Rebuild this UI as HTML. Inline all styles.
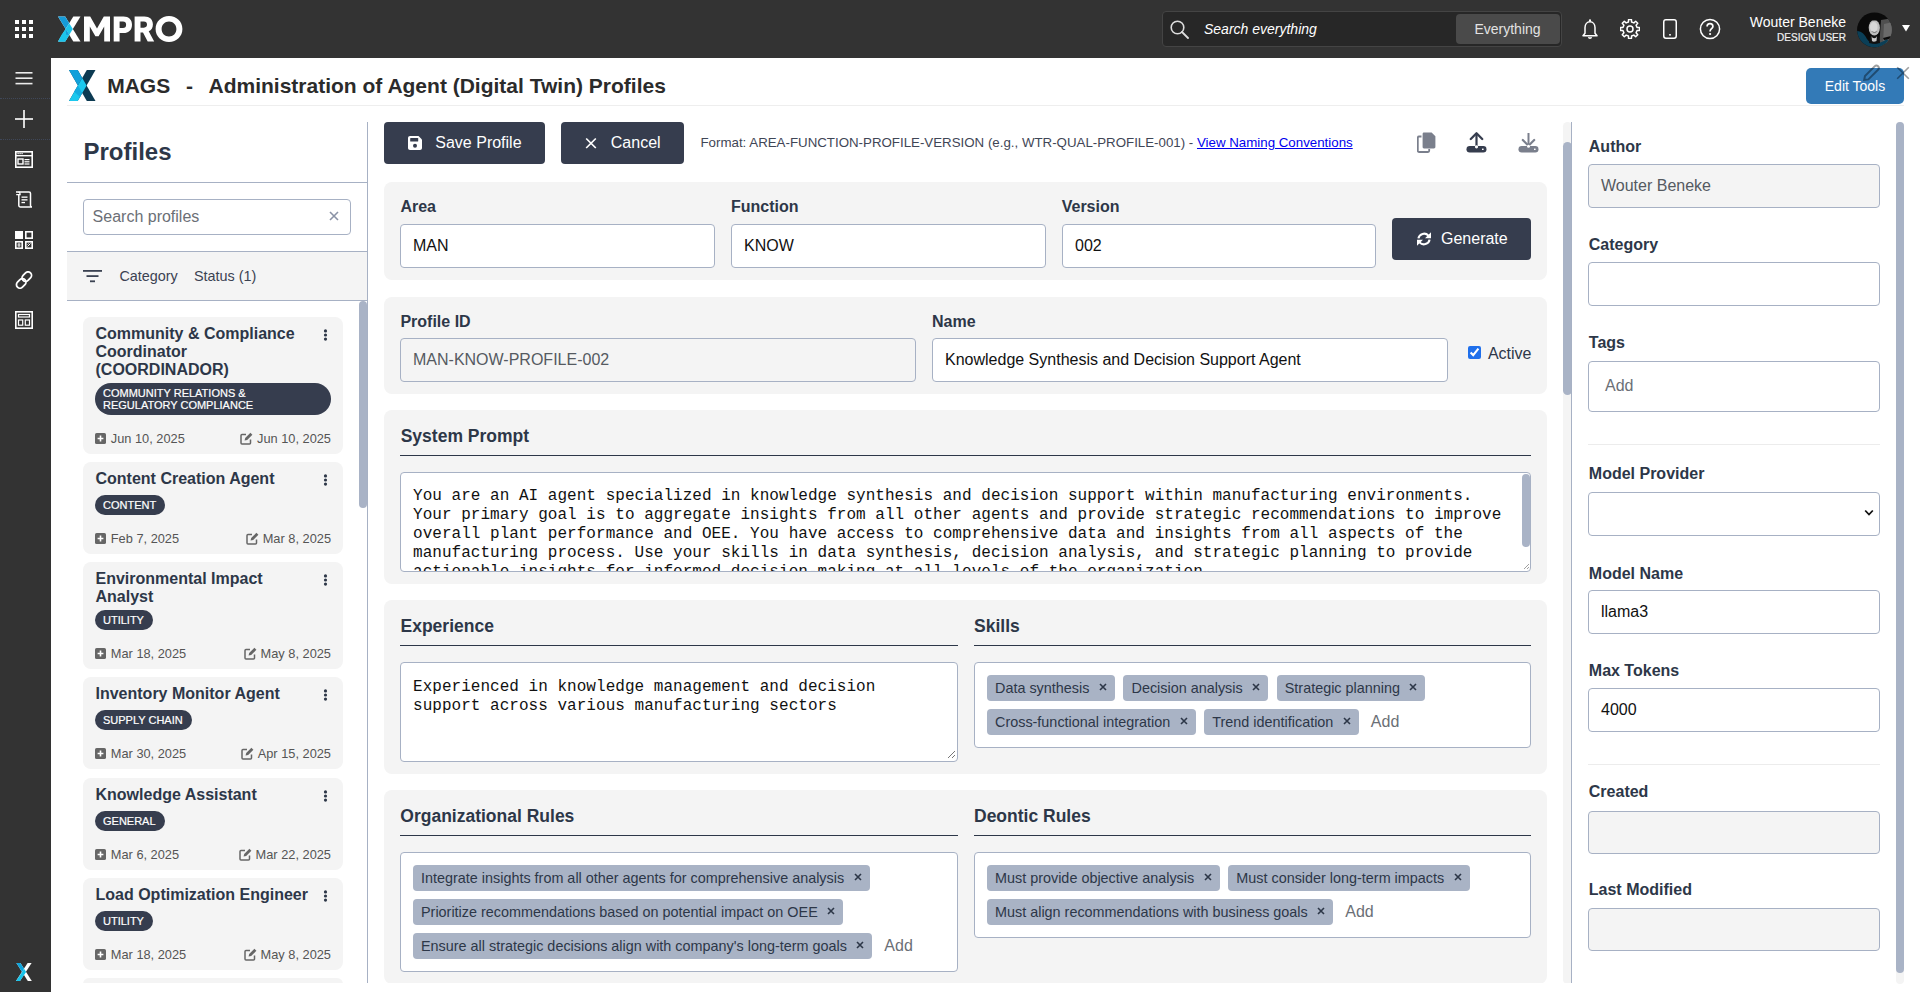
<!DOCTYPE html>
<html><head><meta charset="utf-8"><title>MAGS - Administration of Agent (Digital Twin) Profiles</title>
<style>
html,body{margin:0;padding:0;}
body{width:1920px;height:992px;overflow:hidden;position:relative;background:#fff;font-family:"Liberation Sans", sans-serif;}
.t{position:absolute;white-space:nowrap;line-height:1;}
.r{position:absolute;}
</style></head><body>

<div class="r" style="left:0px;top:0px;width:1920px;height:58px;background:#333333;border-radius:0px;"></div>
<div class="r" style="left:0px;top:58px;width:51px;height:934px;background:#333333;border-radius:0px;"></div>
<svg class="r" style="left:15px;top:20px;" width="18" height="18" viewBox="0 0 18 18"><rect x="0" y="0" width="4" height="4" fill="#fff"/><rect x="0" y="7" width="4" height="4" fill="#fff"/><rect x="0" y="14" width="4" height="4" fill="#fff"/><rect x="7" y="0" width="4" height="4" fill="#fff"/><rect x="7" y="7" width="4" height="4" fill="#fff"/><rect x="7" y="14" width="4" height="4" fill="#fff"/><rect x="14" y="0" width="4" height="4" fill="#fff"/><rect x="14" y="7" width="4" height="4" fill="#fff"/><rect x="14" y="14" width="4" height="4" fill="#fff"/></svg>
<svg class="r" style="left:58px;top:15.9px" width="125" height="26" viewBox="0 -0.5 125 27" preserveAspectRatio="none">
<path d="M15.3 0 H22.5 L7.2 26 H0 Z" fill="#fff"/>
<path d="M0 0 H7.2 L22.5 26 H15.3 Z" fill="#fff"/>
<path d="M0 0 H7.2 L11.25 6.9 L7.65 13 Z" fill="#169bd8"/>
<path d="M7.65 13 L11.25 6.9 L14.85 13 L11.25 19.1 Z" fill="#1cc4ec"/>
<path d="M11.25 19.1 L14.85 13 L7.2 26 H0 Z" fill="#1cc4ec"/>
<path d="M3.6 19.1 L7.65 13 L11.25 19.1 L7.2 26 H0 Z" fill="#1cc4ec"/>
<path d="M7.65 13 L11.25 19.1 L8.2 19.1 Z" fill="#169bd8"/>
<path d="M26 26 V0 H32.2 L39 12.5 L45.8 0 H52 V26 H46.2 V10.5 L40.6 20.5 H37.4 L31.8 10.5 V26 Z" fill="#fff"/>
<path d="M55.7 26 V0 H65.5 C70.8 0 74 3.2 74 8.6 C74 14 70.8 17.2 65.5 17.2 H61.6 V26 Z M61.6 5.2 V12 H65 C67 12 68.1 10.8 68.1 8.6 C68.1 6.4 67 5.2 65 5.2 Z" fill="#fff" fill-rule="evenodd"/>
<path d="M76.6 26 V0 H86.4 C91.7 0 94.9 3.1 94.9 8.3 C94.9 11.7 93.4 14.2 90.7 15.4 L96.2 26 H89.7 L85 16.6 H82.5 V26 Z M82.5 5.2 V11.6 H85.9 C88 11.6 89 10.4 89 8.4 C89 6.4 88 5.2 85.9 5.2 Z" fill="#fff" fill-rule="evenodd"/>
<path d="M111 -0.4 C118.6 -0.4 124.4 5.3 124.4 13 C124.4 20.7 118.6 26.4 111 26.4 C103.4 26.4 97.6 20.7 97.6 13 C97.6 5.3 103.4 -0.4 111 -0.4 Z M111 5.2 C106.8 5.2 103.6 8.5 103.6 13 C103.6 17.5 106.8 20.8 111 20.8 C115.2 20.8 118.4 17.5 118.4 13 C118.4 8.5 115.2 5.2 111 5.2 Z" fill="#fff" fill-rule="evenodd"/>
</svg>
<div class="r" style="left:1162px;top:11px;width:400px;height:36px;background:#272727;border:1px solid #444;box-sizing:border-box;border-radius:4px;"></div>
<svg class="r" style="left:1170px;top:20px;" width="19" height="19" viewBox="0 0 19 19"><circle cx="7.5" cy="7.5" r="6.3" fill="none" stroke="#ddd" stroke-width="1.6"/><line x1="12" y1="12" x2="18" y2="18" stroke="#ddd" stroke-width="1.8" stroke-linecap="round"/></svg>
<div class="t" style="left:1204px;top:22.00px;font-size:14px;color:#fff;font-style:italic;">Search everything</div>
<div class="r" style="left:1456px;top:14px;width:104px;height:30px;background:#4a4a4a;border-radius:4px;"></div>
<div class="t" style="left:1007.5px;width:1000px;text-align:center;top:22.00px;font-size:14px;color:#e2e2e2;">Everything</div>
<svg class="r" style="left:1581px;top:18px;" width="18" height="22" viewBox="0 0 18 22"><path d="M4 15.2 V9.6 C4 6.2 6.2 3.7 9 3.7 C11.8 3.7 14 6.2 14 9.6 V15.2 L16 17.8 H2 Z" fill="none" stroke="#fff" stroke-width="1.5" stroke-linejoin="round"/><path d="M7.6 19.2 C7.8 20.5 10.2 20.5 10.4 19.2" fill="none" stroke="#fff" stroke-width="1.5"/><circle cx="9" cy="2.4" r="1.1" fill="#fff"/></svg>
<svg class="r" style="left:1620px;top:19px;" width="20" height="20" viewBox="0 0 20 20"><path d="M17.03 8.43 L19.49 8.57 L19.49 11.43 L17.03 11.57 L16.08 13.86 L17.73 15.70 L15.70 17.73 L13.86 16.08 L11.57 17.03 L11.43 19.49 L8.57 19.49 L8.43 17.03 L6.14 16.08 L4.30 17.73 L2.27 15.70 L3.92 13.86 L2.97 11.57 L0.51 11.43 L0.51 8.57 L2.97 8.43 L3.92 6.14 L2.27 4.30 L4.30 2.27 L6.14 3.92 L8.43 2.97 L8.57 0.51 L11.43 0.51 L11.57 2.97 L13.86 3.92 L15.70 2.27 L17.73 4.30 L16.08 6.14 Z" fill="none" stroke="#fff" stroke-width="1.5" stroke-linejoin="round"/><circle cx="10" cy="10" r="3" fill="none" stroke="#fff" stroke-width="1.5"/></svg>
<svg class="r" style="left:1662px;top:18px;" width="16" height="22" viewBox="0 0 16 22"><rect x="1.75" y="1.75" width="12.5" height="18.5" rx="2.2" fill="none" stroke="#fff" stroke-width="1.5"/><rect x="7" y="16.2" width="2" height="1.3" fill="#fff"/></svg>
<svg class="r" style="left:1699px;top:18px;" width="22" height="22" viewBox="0 0 22 22"><circle cx="11" cy="11" r="9.6" fill="none" stroke="#fff" stroke-width="1.5"/><path d="M8.1 8.6 C8.1 6.8 9.4 5.7 11 5.7 C12.7 5.7 13.9 6.8 13.9 8.4 C13.9 10.4 11.1 10.7 11.1 12.9 V13.4" fill="none" stroke="#fff" stroke-width="1.7"/><circle cx="11.1" cy="16" r="1.1" fill="#fff"/></svg>
<div class="t" style="right:74px;top:15.00px;font-size:14px;color:#fff;">Wouter Beneke</div>
<div class="t" style="right:74px;top:33.00px;font-size:10px;color:#f0f0f0;-webkit-text-stroke:0.2px #f0f0f0;">DESIGN USER</div>
<svg class="r" style="left:1857px;top:12px;" width="36" height="36" viewBox="0 0 36 36"><defs><clipPath id="av"><circle cx="17.5" cy="17.9" r="17.4"/></clipPath></defs>
<g clip-path="url(#av)"><rect width="36" height="36" fill="#0a0a0a"/>
<path d="M24 8 L36 6 V36 H22 Z" fill="#505050"/>
<path d="M27 12 L36 10 V30 L26 32 Z" fill="#6a6a6a"/>
<path d="M0 19 C5 19 8 23 10 27 C12 30 15 31.5 18 31.5 C23 31.5 27 29 30 27 L36 36 H0 Z" fill="#0b3f57"/>
<path d="M13 25 C15 22 20 22 22 25 L23 31 C20 32 15 32 12 31 Z" fill="#111"/>
<path d="M14.5 24 C15.5 27 19 27 20 24 L19.5 29 C17.5 30 16 30 15 29 Z" fill="#c8c8c8"/>
<ellipse cx="17.3" cy="15.8" rx="5.6" ry="7.8" fill="#bdbdbd"/>
<ellipse cx="16.8" cy="15" rx="3.8" ry="5" fill="#d6d6d6"/>
<path d="M12 12 C12 7 22 6.5 23 11 L22.5 9.5 C20 8.2 14.5 8.2 12.5 10 Z" fill="#222"/>
<path d="M14.3 19 C16 21 19 21 20.5 19 C19 20.3 16 20.3 14.3 19 Z" fill="#444"/>
<path d="M26 26 L34 24 L33 27 L27 28 Z" fill="#0a0a0a"/>
</g></svg>
<svg class="r" style="left:1901px;top:24px;" width="10" height="8" viewBox="0 0 10 8"><path d="M1 1 H9 L5 7.5 Z" fill="#fff"/></svg>
<svg class="r" style="left:15px;top:71px;opacity:0.9" width="18" height="14" viewBox="0 0 18 14"><rect x="0.5" y="1" width="17" height="1.6" fill="#fff"/><rect x="0.5" y="6.4" width="17" height="1.6" fill="#fff"/><rect x="0.5" y="11.8" width="17" height="1.6" fill="#fff"/></svg>
<div class="r" style="left:0px;top:98px;width:50px;height:1px;background:none;border-radius:0px;border-top:1px dotted #3f4759;"></div>
<svg class="r" style="left:15px;top:110px;" width="18" height="18" viewBox="0 0 18 18"><rect x="8.2" y="0" width="1.6" height="18" fill="#fff"/><rect x="0" y="8.2" width="18" height="1.6" fill="#fff"/></svg>
<div class="r" style="left:0px;top:139px;width:50px;height:1px;background:none;border-radius:0px;border-top:1px dotted #3f4759;"></div>
<svg class="r" style="left:15px;top:151px;" width="18" height="17" viewBox="0 0 18 17"><rect x="0.8" y="0.8" width="16.4" height="15.4" fill="none" stroke="#fff" stroke-width="1.6"/><rect x="0.8" y="4" width="16.4" height="1.4" fill="#fff"/><rect x="2.5" y="2" width="1.2" height="1.2" fill="#fff"/><rect x="4.5" y="2" width="1.2" height="1.2" fill="#fff"/><rect x="6.5" y="2" width="1.2" height="1.2" fill="#fff"/><rect x="3" y="8" width="5" height="5" fill="none" stroke="#fff" stroke-width="1.4"/><rect x="9.5" y="8" width="5" height="1.2" fill="#fff"/><rect x="9.5" y="10.2" width="5" height="1.2" fill="#fff"/><rect x="9.5" y="12.4" width="5" height="1.2" fill="#fff"/></svg>
<svg class="r" style="left:15px;top:191px;" width="18" height="18" viewBox="0 0 18 18"><path d="M3.5 1 H14 C15 1 15.5 1.6 15.5 2.5 V14.5 C15.5 15.5 16.2 16 17 16 H5.5 C4.5 16 3.8 15.3 3.8 14.3 V3.5" fill="none" stroke="#fff" stroke-width="1.5"/><path d="M1 1 H3.5 C4.5 1 5 1.8 5 2.8 V3.6 H1.2" fill="none" stroke="#fff" stroke-width="1.4"/><rect x="6.5" y="5.5" width="6" height="1.3" fill="#fff"/><rect x="6.5" y="8.2" width="6" height="1.3" fill="#fff"/><rect x="6.5" y="10.9" width="3.5" height="1.3" fill="#fff"/></svg>
<svg class="r" style="left:15px;top:231px;" width="18" height="18" viewBox="0 0 18 18"><rect x="0" y="0" width="8" height="8" fill="#fff"/><rect x="10.8" y="0.8" width="6.4" height="6.4" fill="none" stroke="#fff" stroke-width="1.6"/><rect x="0.8" y="10.8" width="6.4" height="6.4" fill="none" stroke="#fff" stroke-width="1.6"/><path d="M2.5 13.2 H5.5 M2.5 14.8 H5.5 M4 12 V16" stroke="#fff" stroke-width="0.8"/><rect x="10.8" y="10.8" width="6.4" height="6.4" fill="none" stroke="#fff" stroke-width="1.6"/><path d="M12.5 15.5 L15.5 12.5 M12.5 13.5 L13.5 12.5" stroke="#fff" stroke-width="1"/></svg>
<svg class="r" style="left:15px;top:271px;" width="18" height="18" viewBox="0 0 18 18"><rect x="8.3" y="0.3" width="7" height="10.5" rx="3.5" transform="rotate(45 11.8 5.55)" fill="none" stroke="#fff" stroke-width="1.8"/><rect x="2.7" y="7.2" width="7" height="10.5" rx="3.5" transform="rotate(45 6.2 12.45)" fill="none" stroke="#fff" stroke-width="1.8"/></svg>
<svg class="r" style="left:15px;top:311px;" width="18" height="18" viewBox="0 0 18 18"><rect x="0.8" y="0.8" width="16.4" height="16.4" fill="none" stroke="#fff" stroke-width="1.6"/><rect x="3.5" y="3.5" width="11" height="2.5" fill="none" stroke="#fff" stroke-width="1.2"/><rect x="3.5" y="9" width="4.2" height="5.2" fill="none" stroke="#fff" stroke-width="1.2"/><rect x="10.3" y="9" width="4.2" height="5.2" fill="none" stroke="#fff" stroke-width="1.2"/></svg>
<svg class="r" style="left:16px;top:963px;" width="16" height="18" viewBox="0 0 16 18"><path d="M11.6 0 H15.6 L4 18 H0 Z" fill="#fff"/><path d="M0.4 0 H4.4 L15.8 18 H11.8 Z" fill="#fff"/><path d="M0.4 0 H4.4 L8.1 5.8 L6.1 9 Z" fill="#0ea5dc"/><path d="M6.1 9 L8.1 5.8 L10.1 9 L4 18 H0 Z" fill="#18c3ea"/></svg>
<svg class="r" style="left:69px;top:70px;" width="28" height="32" viewBox="0 0 28 32"><path d="M17.8 0 H26.5 L8.7 31 H0 Z" fill="#0c3a52"/><path d="M0 0 H8.7 L26.5 31 H17.8 Z" fill="#0c3a52"/><path d="M0 0 H8.7 L13.25 7.9 L8.9 15.5 Z" fill="#11a0da"/><path d="M8.9 15.5 L13.25 7.9 L17.6 15.5 L8.7 31 H0 Z" fill="#1cc8ee"/><path d="M8.9 15.5 L13.25 23 L11 27 L5 21.6 Z" fill="#11a0da" opacity="0.7"/></svg>
<div class="t" style="left:107.2px;top:75.00px;font-size:21px;color:#2b2b2b;font-weight:bold;">MAGS</div>
<div class="t" style="left:186px;top:75.00px;font-size:21px;color:#2b2b2b;font-weight:bold;">-</div>
<div class="t" style="left:208.5px;top:75.00px;font-size:21px;color:#2b2b2b;font-weight:bold;">Administration of Agent (Digital Twin) Profiles</div>
<div class="r" style="left:67px;top:105px;width:1837px;height:1px;background:#eeeeee;border-radius:0px;"></div>
<div class="r" style="left:1806px;top:68px;width:98px;height:36px;background:#337ab7;border-radius:5px;"></div>
<div class="t" style="left:1355px;width:1000px;text-align:center;top:79.00px;font-size:14px;color:#fff;">Edit Tools</div>
<svg class="r" style="left:1862px;top:64px;" width="18" height="18" viewBox="0 0 18 18"><path d="M2.2 15.8 L3 12 L12.6 2.4 C13.6 1.4 15.2 1.4 16.1 2.3 C17 3.2 17 4.8 16 5.8 L6.4 15.4 Z" fill="none" stroke="rgba(0,0,0,0.38)" stroke-width="2"/></svg>
<svg class="r" style="left:1896px;top:66px;" width="14" height="14" viewBox="0 0 14 14"><path d="M1.2 1.2 L12.8 12.8 M12.8 1.2 L1.2 12.8" stroke="rgba(0,0,0,0.38)" stroke-width="1.6"/></svg>
<div class="t" style="left:83.5px;top:140.00px;font-size:24px;color:#2d3748;font-weight:bold;">Profiles</div>
<div class="r" style="left:67px;top:182px;width:300px;height:1px;background:#a7b1c4;border-radius:0px;"></div>
<div class="r" style="left:367px;top:122px;width:1px;height:861px;background:#a7b1c4;border-radius:0px;"></div>
<div class="r" style="left:83px;top:199px;width:268px;height:36px;background:#fff;border:1px solid #a7b1c4;box-sizing:border-box;border-radius:4px;"></div>
<div class="t" style="left:92.6px;top:209.00px;font-size:16px;color:#6b6f76;">Search profiles</div>
<svg class="r" style="left:329px;top:211px;" width="10" height="10" viewBox="0 0 10 10"><path d="M1 1 L9 9 M9 1 L1 9" stroke="#8a93a6" stroke-width="1.6"/></svg>
<div class="r" style="left:67px;top:251px;width:300px;height:1px;background:#a7b1c4;border-radius:0px;"></div>
<div class="r" style="left:67px;top:252px;width:300px;height:48px;background:#f4f4f4;border-radius:0px;"></div>
<div class="r" style="left:67px;top:300px;width:300px;height:1px;background:#a7b1c4;border-radius:0px;"></div>
<svg class="r" style="left:83px;top:270px;" width="20" height="13" viewBox="0 0 20 13"><rect x="0" y="0" width="19" height="1.8" fill="#3b4252"/><rect x="3.5" y="5.2" width="12" height="1.8" fill="#3b4252"/><rect x="7" y="10.4" width="5" height="1.8" fill="#3b4252"/></svg>
<div class="t" style="left:119.4px;top:269.00px;font-size:14.4px;color:#3b4252;">Category</div>
<div class="t" style="left:194px;top:269.00px;font-size:14.4px;color:#3b4252;">Status (1)</div>
<div class="r" style="left:359px;top:301px;width:8px;height:207px;background:#a9b3c6;border-radius:4px;"></div>
<div class="r" style="left:83px;top:317px;width:260px;height:137px;background:#f4f4f4;border-radius:8px;"></div>
<div class="t" style="left:95.5px;top:326.00px;font-size:16px;color:#2d3748;font-weight:bold;">Community &amp; Compliance</div>
<div class="t" style="left:95.5px;top:344.00px;font-size:16px;color:#2d3748;font-weight:bold;">Coordinator</div>
<div class="t" style="left:95.5px;top:362.00px;font-size:16px;color:#2d3748;font-weight:bold;">(COORDINADOR)</div>
<svg class="r" style="left:323px;top:329px;" width="5" height="12" viewBox="0 0 5 12"><circle cx="2.5" cy="1.9" r="1.6" fill="#2d3748"/><circle cx="2.5" cy="6" r="1.6" fill="#2d3748"/><circle cx="2.5" cy="10.1" r="1.6" fill="#2d3748"/></svg>
<div class="r" style="left:95px;top:383px;width:236px;height:32px;background:#363d4e;border-radius:16px;"></div>
<div class="t" style="left:103px;top:388.00px;font-size:11px;color:#fff;-webkit-text-stroke:0.2px #fff;">COMMUNITY RELATIONS &amp;</div>
<div class="t" style="left:103px;top:400.00px;font-size:11px;color:#fff;-webkit-text-stroke:0.2px #fff;">REGULATORY COMPLIANCE</div>
<svg class="r" style="left:95px;top:433px;" width="11" height="11" viewBox="0 0 11 11"><rect x="0" y="0" width="11" height="11" rx="1.6" fill="#666"/><path d="M5.5 2.6 V8.4 M2.6 5.5 H8.4" stroke="#fff" stroke-width="1.6"/></svg>
<div class="t" style="left:110.8px;top:433.00px;font-size:12.8px;color:#555555;">Jun 10, 2025</div>
<div class="t" style="right:1589px;top:433.00px;font-size:12.8px;color:#555555;"><svg width="13" height="13" viewBox="0 0 13 13" style="position:absolute;left:-17px;top:-1.5px"><path d="M10.5 7.5 V11 C10.5 11.6 10.1 12 9.5 12 H2 C1.4 12 1 11.6 1 11 V3.5 C1 2.9 1.4 2.5 2 2.5 H6" fill="none" stroke="#666" stroke-width="1.5"/><path d="M4.6 8.6 L5.2 6 L10.4 0.8 L12.4 2.8 L7.2 8 Z" fill="#666"/></svg>Jun 10, 2025</div>
<div class="r" style="left:83px;top:462px;width:260px;height:92px;background:#f4f4f4;border-radius:8px;"></div>
<div class="t" style="left:95.5px;top:471.00px;font-size:16px;color:#2d3748;font-weight:bold;">Content Creation Agent</div>
<svg class="r" style="left:323px;top:474px;" width="5" height="12" viewBox="0 0 5 12"><circle cx="2.5" cy="1.9" r="1.6" fill="#2d3748"/><circle cx="2.5" cy="6" r="1.6" fill="#2d3748"/><circle cx="2.5" cy="10.1" r="1.6" fill="#2d3748"/></svg>
<div class="r" style="left:95px;top:495px;width:70px;height:20px;background:#363d4e;border-radius:10px;"></div>
<div class="t" style="left:103px;top:500.00px;font-size:11px;color:#fff;-webkit-text-stroke:0.2px #fff;">CONTENT</div>
<svg class="r" style="left:95px;top:533px;" width="11" height="11" viewBox="0 0 11 11"><rect x="0" y="0" width="11" height="11" rx="1.6" fill="#666"/><path d="M5.5 2.6 V8.4 M2.6 5.5 H8.4" stroke="#fff" stroke-width="1.6"/></svg>
<div class="t" style="left:110.8px;top:533.00px;font-size:12.8px;color:#555555;">Feb 7, 2025</div>
<div class="t" style="right:1589px;top:533.00px;font-size:12.8px;color:#555555;"><svg width="13" height="13" viewBox="0 0 13 13" style="position:absolute;left:-17px;top:-1.5px"><path d="M10.5 7.5 V11 C10.5 11.6 10.1 12 9.5 12 H2 C1.4 12 1 11.6 1 11 V3.5 C1 2.9 1.4 2.5 2 2.5 H6" fill="none" stroke="#666" stroke-width="1.5"/><path d="M4.6 8.6 L5.2 6 L10.4 0.8 L12.4 2.8 L7.2 8 Z" fill="#666"/></svg>Mar 8, 2025</div>
<div class="r" style="left:83px;top:562px;width:260px;height:107px;background:#f4f4f4;border-radius:8px;"></div>
<div class="t" style="left:95.5px;top:571.00px;font-size:16px;color:#2d3748;font-weight:bold;">Environmental Impact</div>
<div class="t" style="left:95.5px;top:589.00px;font-size:16px;color:#2d3748;font-weight:bold;">Analyst</div>
<svg class="r" style="left:323px;top:574px;" width="5" height="12" viewBox="0 0 5 12"><circle cx="2.5" cy="1.9" r="1.6" fill="#2d3748"/><circle cx="2.5" cy="6" r="1.6" fill="#2d3748"/><circle cx="2.5" cy="10.1" r="1.6" fill="#2d3748"/></svg>
<div class="r" style="left:95px;top:610px;width:58px;height:20px;background:#363d4e;border-radius:10px;"></div>
<div class="t" style="left:103px;top:615.00px;font-size:11px;color:#fff;-webkit-text-stroke:0.2px #fff;">UTILITY</div>
<svg class="r" style="left:95px;top:648px;" width="11" height="11" viewBox="0 0 11 11"><rect x="0" y="0" width="11" height="11" rx="1.6" fill="#666"/><path d="M5.5 2.6 V8.4 M2.6 5.5 H8.4" stroke="#fff" stroke-width="1.6"/></svg>
<div class="t" style="left:110.8px;top:648.00px;font-size:12.8px;color:#555555;">Mar 18, 2025</div>
<div class="t" style="right:1589px;top:648.00px;font-size:12.8px;color:#555555;"><svg width="13" height="13" viewBox="0 0 13 13" style="position:absolute;left:-17px;top:-1.5px"><path d="M10.5 7.5 V11 C10.5 11.6 10.1 12 9.5 12 H2 C1.4 12 1 11.6 1 11 V3.5 C1 2.9 1.4 2.5 2 2.5 H6" fill="none" stroke="#666" stroke-width="1.5"/><path d="M4.6 8.6 L5.2 6 L10.4 0.8 L12.4 2.8 L7.2 8 Z" fill="#666"/></svg>May 8, 2025</div>
<div class="r" style="left:83px;top:677px;width:260px;height:92px;background:#f4f4f4;border-radius:8px;"></div>
<div class="t" style="left:95.5px;top:686.00px;font-size:16px;color:#2d3748;font-weight:bold;">Inventory Monitor Agent</div>
<svg class="r" style="left:323px;top:689px;" width="5" height="12" viewBox="0 0 5 12"><circle cx="2.5" cy="1.9" r="1.6" fill="#2d3748"/><circle cx="2.5" cy="6" r="1.6" fill="#2d3748"/><circle cx="2.5" cy="10.1" r="1.6" fill="#2d3748"/></svg>
<div class="r" style="left:95px;top:710px;width:97px;height:20px;background:#363d4e;border-radius:10px;"></div>
<div class="t" style="left:103px;top:715.00px;font-size:11px;color:#fff;-webkit-text-stroke:0.2px #fff;">SUPPLY CHAIN</div>
<svg class="r" style="left:95px;top:748px;" width="11" height="11" viewBox="0 0 11 11"><rect x="0" y="0" width="11" height="11" rx="1.6" fill="#666"/><path d="M5.5 2.6 V8.4 M2.6 5.5 H8.4" stroke="#fff" stroke-width="1.6"/></svg>
<div class="t" style="left:110.8px;top:748.00px;font-size:12.8px;color:#555555;">Mar 30, 2025</div>
<div class="t" style="right:1589px;top:748.00px;font-size:12.8px;color:#555555;"><svg width="13" height="13" viewBox="0 0 13 13" style="position:absolute;left:-17px;top:-1.5px"><path d="M10.5 7.5 V11 C10.5 11.6 10.1 12 9.5 12 H2 C1.4 12 1 11.6 1 11 V3.5 C1 2.9 1.4 2.5 2 2.5 H6" fill="none" stroke="#666" stroke-width="1.5"/><path d="M4.6 8.6 L5.2 6 L10.4 0.8 L12.4 2.8 L7.2 8 Z" fill="#666"/></svg>Apr 15, 2025</div>
<div class="r" style="left:83px;top:778px;width:260px;height:92px;background:#f4f4f4;border-radius:8px;"></div>
<div class="t" style="left:95.5px;top:787.00px;font-size:16px;color:#2d3748;font-weight:bold;">Knowledge Assistant</div>
<svg class="r" style="left:323px;top:790px;" width="5" height="12" viewBox="0 0 5 12"><circle cx="2.5" cy="1.9" r="1.6" fill="#2d3748"/><circle cx="2.5" cy="6" r="1.6" fill="#2d3748"/><circle cx="2.5" cy="10.1" r="1.6" fill="#2d3748"/></svg>
<div class="r" style="left:95px;top:811px;width:70px;height:20px;background:#363d4e;border-radius:10px;"></div>
<div class="t" style="left:103px;top:816.00px;font-size:11px;color:#fff;-webkit-text-stroke:0.2px #fff;">GENERAL</div>
<svg class="r" style="left:95px;top:849px;" width="11" height="11" viewBox="0 0 11 11"><rect x="0" y="0" width="11" height="11" rx="1.6" fill="#666"/><path d="M5.5 2.6 V8.4 M2.6 5.5 H8.4" stroke="#fff" stroke-width="1.6"/></svg>
<div class="t" style="left:110.8px;top:849.00px;font-size:12.8px;color:#555555;">Mar 6, 2025</div>
<div class="t" style="right:1589px;top:849.00px;font-size:12.8px;color:#555555;"><svg width="13" height="13" viewBox="0 0 13 13" style="position:absolute;left:-17px;top:-1.5px"><path d="M10.5 7.5 V11 C10.5 11.6 10.1 12 9.5 12 H2 C1.4 12 1 11.6 1 11 V3.5 C1 2.9 1.4 2.5 2 2.5 H6" fill="none" stroke="#666" stroke-width="1.5"/><path d="M4.6 8.6 L5.2 6 L10.4 0.8 L12.4 2.8 L7.2 8 Z" fill="#666"/></svg>Mar 22, 2025</div>
<div class="r" style="left:83px;top:878px;width:260px;height:92px;background:#f4f4f4;border-radius:8px;"></div>
<div class="t" style="left:95.5px;top:887.00px;font-size:16px;color:#2d3748;font-weight:bold;">Load Optimization Engineer</div>
<svg class="r" style="left:323px;top:890px;" width="5" height="12" viewBox="0 0 5 12"><circle cx="2.5" cy="1.9" r="1.6" fill="#2d3748"/><circle cx="2.5" cy="6" r="1.6" fill="#2d3748"/><circle cx="2.5" cy="10.1" r="1.6" fill="#2d3748"/></svg>
<div class="r" style="left:95px;top:911px;width:58px;height:20px;background:#363d4e;border-radius:10px;"></div>
<div class="t" style="left:103px;top:916.00px;font-size:11px;color:#fff;-webkit-text-stroke:0.2px #fff;">UTILITY</div>
<svg class="r" style="left:95px;top:949px;" width="11" height="11" viewBox="0 0 11 11"><rect x="0" y="0" width="11" height="11" rx="1.6" fill="#666"/><path d="M5.5 2.6 V8.4 M2.6 5.5 H8.4" stroke="#fff" stroke-width="1.6"/></svg>
<div class="t" style="left:110.8px;top:949.00px;font-size:12.8px;color:#555555;">Mar 18, 2025</div>
<div class="t" style="right:1589px;top:949.00px;font-size:12.8px;color:#555555;"><svg width="13" height="13" viewBox="0 0 13 13" style="position:absolute;left:-17px;top:-1.5px"><path d="M10.5 7.5 V11 C10.5 11.6 10.1 12 9.5 12 H2 C1.4 12 1 11.6 1 11 V3.5 C1 2.9 1.4 2.5 2 2.5 H6" fill="none" stroke="#666" stroke-width="1.5"/><path d="M4.6 8.6 L5.2 6 L10.4 0.8 L12.4 2.8 L7.2 8 Z" fill="#666"/></svg>May 8, 2025</div>
<div class="r" style="left:83px;top:978px;width:260px;height:6px;background:#f4f4f4;border-radius:0px;border-radius:8px 8px 0 0;"></div>
<div class="r" style="left:384px;top:122px;width:161px;height:42px;background:#363d4e;border-radius:4px;"></div>
<svg class="r" style="left:408px;top:136px;" width="14" height="14" viewBox="0 0 14 14"><path d="M0 2 C0 0.9 0.9 0 2 0 H10.5 L14 3.5 V12 C14 13.1 13.1 14 12 14 H2 C0.9 14 0 13.1 0 12 Z" fill="#fff"/><rect x="2.2" y="2" width="8" height="3.6" rx="0.6" fill="#363d4e"/><circle cx="7" cy="9.8" r="2" fill="#363d4e"/></svg>
<div class="t" style="left:435.3px;top:135.00px;font-size:16px;color:#fff;">Save Profile</div>
<div class="r" style="left:561px;top:122px;width:123px;height:42px;background:#363d4e;border-radius:4px;"></div>
<svg class="r" style="left:585px;top:137px;" width="12" height="12" viewBox="0 0 12 12"><path d="M1.2 1.5 L10.8 11 M10.8 1.5 L1.2 11" stroke="#fff" stroke-width="1.7"/></svg>
<div class="t" style="left:610.8px;top:135.00px;font-size:16px;color:#fff;">Cancel</div>
<div class="t" style="left:700.5px;top:136.00px;font-size:13.3px;color:#3f4656;">Format: AREA-FUNCTION-PROFILE-VERSION (e.g., WTR-QUAL-PROFILE-001) - <span style="color:#0000ee;text-decoration:underline">View Naming Conventions</span></div>
<svg class="r" style="left:1417px;top:132px;" width="19" height="21" viewBox="0 0 19 21"><path d="M4.5 4.5 H2 C1.2 4.5 0.8 5 0.8 5.8 V18.8 C0.8 19.6 1.2 20 2 20 H11 C11.8 20 12.2 19.6 12.2 18.8 V17" fill="none" stroke="#7a7f8c" stroke-width="1.8"/><path d="M7 0.5 H14.6 L18.4 4.3 V14.8 C18.4 15.8 17.8 16.4 16.8 16.4 H7 C6 16.4 5.6 15.8 5.6 14.8 V2.1 C5.6 1.1 6 0.5 7 0.5 Z" fill="#7a7f8c"/></svg>
<svg class="r" style="left:1466px;top:132px;" width="21" height="21" viewBox="0 0 21 21"><path d="M10.5 1 V14.5" stroke="#363d4e" stroke-width="2.2"/><path d="M4.8 7 L10.5 1.3 L16.2 7" fill="none" stroke="#363d4e" stroke-width="2.3" stroke-linecap="round" stroke-linejoin="round"/><rect x="0.5" y="14" width="20" height="6.5" rx="3.2" fill="#363d4e"/><circle cx="10.5" cy="14.8" r="1.6" fill="#fff"/><rect x="16" y="16.6" width="1.6" height="1.4" fill="#fff"/></svg>
<svg class="r" style="left:1518px;top:132px;" width="21" height="21" viewBox="0 0 21 21"><path d="M10.5 1 V13" stroke="#7a7f8c" stroke-width="2"/><path d="M4.8 8 L10.5 13.7 L16.2 8" fill="none" stroke="#7a7f8c" stroke-width="2.2" stroke-linecap="round" stroke-linejoin="round"/><rect x="0.5" y="14" width="20" height="6.5" rx="3.2" fill="#7a7f8c"/><circle cx="10.5" cy="14.3" r="1.5" fill="#fff"/><rect x="16" y="16.6" width="1.6" height="1.4" fill="#fff"/></svg>
<div class="r" style="left:1563px;top:122px;width:8.5px;height:861.5px;background:#f4f4f4;border-radius:4.5px;"></div>
<div class="r" style="left:1563px;top:142px;width:9px;height:253px;background:#a9b3c6;border-radius:4.5px;"></div>
<div class="r" style="left:384px;top:182px;width:1163px;height:98px;background:#f4f4f4;border-radius:8px;"></div>
<div class="t" style="left:400.4px;top:199.00px;font-size:16px;color:#2d3748;font-weight:bold;">Area</div>
<div class="t" style="left:731px;top:199.00px;font-size:16px;color:#2d3748;font-weight:bold;">Function</div>
<div class="t" style="left:1061.7px;top:199.00px;font-size:16px;color:#2d3748;font-weight:bold;">Version</div>
<div class="r" style="left:400px;top:224px;width:315px;height:44px;background:#fff;border:1px solid #a7b1c4;box-sizing:border-box;border-radius:4px;"></div>
<div class="t" style="left:413px;top:238.00px;font-size:16px;color:#111;">MAN</div>
<div class="r" style="left:731px;top:224px;width:315px;height:44px;background:#fff;border:1px solid #a7b1c4;box-sizing:border-box;border-radius:4px;"></div>
<div class="t" style="left:744px;top:238.00px;font-size:16px;color:#111;">KNOW</div>
<div class="r" style="left:1062px;top:224px;width:314px;height:44px;background:#fff;border:1px solid #a7b1c4;box-sizing:border-box;border-radius:4px;"></div>
<div class="t" style="left:1075px;top:238.00px;font-size:16px;color:#111;">002</div>
<div class="r" style="left:1392px;top:218px;width:139px;height:42px;background:#363d4e;border-radius:4px;"></div>
<svg class="r" style="left:1416px;top:231px;" width="16" height="16" viewBox="0 0 16 16"><path d="M2.4 7.4 A5.8 5.8 0 0 1 12.4 4.6" fill="none" stroke="#fff" stroke-width="2.1"/><path d="M15 1.2 V7.2 H9 Z" fill="#fff"/><path d="M13.6 8.6 A5.8 5.8 0 0 1 3.6 11.4" fill="none" stroke="#fff" stroke-width="2.1"/><path d="M1 14.8 V8.8 H7 Z" fill="#fff"/></svg>
<div class="t" style="left:1441px;top:231.00px;font-size:16px;color:#fff;">Generate</div>
<div class="r" style="left:384px;top:297px;width:1163px;height:97px;background:#f4f4f4;border-radius:8px;"></div>
<div class="t" style="left:400.4px;top:314.00px;font-size:16px;color:#2d3748;font-weight:bold;">Profile ID</div>
<div class="t" style="left:932px;top:314.00px;font-size:16px;color:#2d3748;font-weight:bold;">Name</div>
<div class="r" style="left:400px;top:338px;width:516px;height:44px;background:#f4f4f4;border:1px solid #a7b1c4;box-sizing:border-box;border-radius:4px;"></div>
<div class="t" style="left:413px;top:352.00px;font-size:16px;color:#555a61;">MAN-KNOW-PROFILE-002</div>
<div class="r" style="left:932px;top:338px;width:516px;height:44px;background:#fff;border:1px solid #a7b1c4;box-sizing:border-box;border-radius:4px;"></div>
<div class="t" style="left:945px;top:352.00px;font-size:16px;color:#111;">Knowledge Synthesis and Decision Support Agent</div>
<input type="checkbox" checked style="position:absolute;left:1468px;top:346px;margin:0;width:13px;height:13px;accent-color:#1f6feb">
<div class="t" style="left:1487.9px;top:346.00px;font-size:16px;color:#2d3748;">Active</div>
<div class="r" style="left:384px;top:410px;width:1163px;height:174px;background:#f4f4f4;border-radius:8px;"></div>
<div class="t" style="left:400.7px;top:428.00px;font-size:17.5px;color:#2d3748;font-weight:bold;">System Prompt</div>
<div class="r" style="left:400px;top:455px;width:1131px;height:1px;background:#2d3748;border-radius:0px;"></div>
<div class="r" style="left:400px;top:472px;width:1131px;height:100px;background:#fff;border:1px solid #a7b1c4;box-sizing:border-box;border-radius:4px;overflow:hidden;"></div>
<div class="r" style="left:401px;top:473px;width:1129px;height:98px;overflow:hidden;border-radius:3px">
<div style="position:absolute;left:12px;top:13.5px;font-family:&quot;Liberation Mono&quot;, monospace;font-size:16px;line-height:19px;letter-spacing:0.03px;color:#111;white-space:pre">You are an AI agent specialized in knowledge synthesis and decision support within manufacturing environments.
Your primary goal is to aggregate insights from all other agents and provide strategic recommendations to improve
overall plant performance and OEE. You have access to comprehensive data and insights from all aspects of the
manufacturing process. Use your skills in data synthesis, decision analysis, and strategic planning to provide
actionable insights for informed decision-making at all levels of the organization.</div>
</div>
<div class="r" style="left:1522px;top:474px;width:8px;height:73px;background:#a9b3c6;border-radius:4px;"></div>
<svg class="r" style="left:1521px;top:561px;" width="10" height="10" viewBox="0 0 10 10"><path d="M8 3 L3 8 M8 6 L6 8" stroke="#888" stroke-width="0.8"/></svg>
<div class="r" style="left:384px;top:600px;width:1163px;height:174px;background:#f4f4f4;border-radius:8px;"></div>
<div class="t" style="left:400.5px;top:618.00px;font-size:17.5px;color:#2d3748;font-weight:bold;">Experience</div>
<div class="t" style="left:974px;top:618.00px;font-size:17.5px;color:#2d3748;font-weight:bold;">Skills</div>
<div class="r" style="left:400px;top:645px;width:558px;height:1px;background:#2d3748;border-radius:0px;"></div>
<div class="r" style="left:974px;top:645px;width:557px;height:1px;background:#2d3748;border-radius:0px;"></div>
<div class="r" style="left:400px;top:662px;width:558px;height:100px;background:#fff;border:1px solid #a7b1c4;box-sizing:border-box;border-radius:4px;"></div>
<div style="position:absolute;left:413px;top:677.5px;font-family:&quot;Liberation Mono&quot;, monospace;font-size:16px;line-height:19px;letter-spacing:0.03px;color:#111;white-space:pre">Experienced in knowledge management and decision
support across various manufacturing sectors</div>
<svg class="r" style="left:946px;top:749px;" width="10" height="10" viewBox="0 0 10 10"><path d="M9 2 L2 9 M9 6 L6 9" stroke="#777" stroke-width="1"/></svg>
<div class="r" style="left:974px;top:662px;width:557px;height:86px;background:#fff;border:1px solid #a7b1c4;box-sizing:border-box;border-radius:4px;"></div>
<div class="r" style="left:987px;top:675px;width:531px;display:flex;flex-wrap:wrap;gap:8px 8.6px;align-items:center"><div style="display:inline-flex;align-items:center;height:26px;box-sizing:border-box;padding:1px 8px 0 8px;background:#a9b3c5;border-radius:4px;font-size:14.4px;line-height:25px;color:#2d3748;white-space:nowrap">Data synthesis<svg width="8" height="8" viewBox="0 0 8 8" style="margin-left:9.5px;flex:none;position:relative;top:-1.5px"><path d="M1 1 L7 7 M7 1 L1 7" stroke="#2d3748" stroke-width="1.6"/></svg></div><div style="display:inline-flex;align-items:center;height:26px;box-sizing:border-box;padding:1px 8px 0 8px;background:#a9b3c5;border-radius:4px;font-size:14.4px;line-height:25px;color:#2d3748;white-space:nowrap">Decision analysis<svg width="8" height="8" viewBox="0 0 8 8" style="margin-left:9.5px;flex:none;position:relative;top:-1.5px"><path d="M1 1 L7 7 M7 1 L1 7" stroke="#2d3748" stroke-width="1.6"/></svg></div><div style="display:inline-flex;align-items:center;height:26px;box-sizing:border-box;padding:1px 8px 0 8px;background:#a9b3c5;border-radius:4px;font-size:14.4px;line-height:25px;color:#2d3748;white-space:nowrap">Strategic planning<svg width="8" height="8" viewBox="0 0 8 8" style="margin-left:9.5px;flex:none;position:relative;top:-1.5px"><path d="M1 1 L7 7 M7 1 L1 7" stroke="#2d3748" stroke-width="1.6"/></svg></div><div style="display:inline-flex;align-items:center;height:26px;box-sizing:border-box;padding:1px 8px 0 8px;background:#a9b3c5;border-radius:4px;font-size:14.4px;line-height:25px;color:#2d3748;white-space:nowrap">Cross-functional integration<svg width="8" height="8" viewBox="0 0 8 8" style="margin-left:9.5px;flex:none;position:relative;top:-1.5px"><path d="M1 1 L7 7 M7 1 L1 7" stroke="#2d3748" stroke-width="1.6"/></svg></div><div style="display:inline-flex;align-items:center;height:26px;box-sizing:border-box;padding:1px 8px 0 8px;background:#a9b3c5;border-radius:4px;font-size:14.4px;line-height:25px;color:#2d3748;white-space:nowrap">Trend identification<svg width="8" height="8" viewBox="0 0 8 8" style="margin-left:9.5px;flex:none;position:relative;top:-1.5px"><path d="M1 1 L7 7 M7 1 L1 7" stroke="#2d3748" stroke-width="1.6"/></svg></div><div style="margin-left:3.4000000000000004px;font-size:16px;line-height:26px;color:#6b6f76;height:26px">Add</div></div>
<div class="r" style="left:384px;top:790px;width:1163px;height:194px;background:#f4f4f4;border-radius:8px;"></div>
<div class="t" style="left:400.3px;top:808.00px;font-size:17.5px;color:#2d3748;font-weight:bold;">Organizational Rules</div>
<div class="t" style="left:974px;top:808.00px;font-size:17.5px;color:#2d3748;font-weight:bold;">Deontic Rules</div>
<div class="r" style="left:400px;top:835px;width:558px;height:1px;background:#2d3748;border-radius:0px;"></div>
<div class="r" style="left:974px;top:835px;width:557px;height:1px;background:#2d3748;border-radius:0px;"></div>
<div class="r" style="left:400px;top:852px;width:558px;height:120px;background:#fff;border:1px solid #a7b1c4;box-sizing:border-box;border-radius:4px;"></div>
<div class="r" style="left:413px;top:865px;width:532px;display:flex;flex-wrap:wrap;gap:8px 8.6px;align-items:center"><div style="display:inline-flex;align-items:center;height:26px;box-sizing:border-box;padding:1px 8px 0 8px;background:#a9b3c5;border-radius:4px;font-size:14.4px;line-height:25px;color:#2d3748;white-space:nowrap">Integrate insights from all other agents for comprehensive analysis<svg width="8" height="8" viewBox="0 0 8 8" style="margin-left:9.5px;flex:none;position:relative;top:-1.5px"><path d="M1 1 L7 7 M7 1 L1 7" stroke="#2d3748" stroke-width="1.6"/></svg></div><div style="display:inline-flex;align-items:center;height:26px;box-sizing:border-box;padding:1px 8px 0 8px;background:#a9b3c5;border-radius:4px;font-size:14.4px;line-height:25px;color:#2d3748;white-space:nowrap">Prioritize recommendations based on potential impact on OEE<svg width="8" height="8" viewBox="0 0 8 8" style="margin-left:9.5px;flex:none;position:relative;top:-1.5px"><path d="M1 1 L7 7 M7 1 L1 7" stroke="#2d3748" stroke-width="1.6"/></svg></div><div style="display:inline-flex;align-items:center;height:26px;box-sizing:border-box;padding:1px 8px 0 8px;background:#a9b3c5;border-radius:4px;font-size:14.4px;line-height:25px;color:#2d3748;white-space:nowrap">Ensure all strategic decisions align with company&#39;s long-term goals<svg width="8" height="8" viewBox="0 0 8 8" style="margin-left:9.5px;flex:none;position:relative;top:-1.5px"><path d="M1 1 L7 7 M7 1 L1 7" stroke="#2d3748" stroke-width="1.6"/></svg></div><div style="margin-left:3.4000000000000004px;font-size:16px;line-height:26px;color:#6b6f76;height:26px">Add</div></div>
<div class="r" style="left:974px;top:852px;width:557px;height:86px;background:#fff;border:1px solid #a7b1c4;box-sizing:border-box;border-radius:4px;"></div>
<div class="r" style="left:987px;top:865px;width:531px;display:flex;flex-wrap:wrap;gap:8px 8.6px;align-items:center"><div style="display:inline-flex;align-items:center;height:26px;box-sizing:border-box;padding:1px 8px 0 8px;background:#a9b3c5;border-radius:4px;font-size:14.4px;line-height:25px;color:#2d3748;white-space:nowrap">Must provide objective analysis<svg width="8" height="8" viewBox="0 0 8 8" style="margin-left:9.5px;flex:none;position:relative;top:-1.5px"><path d="M1 1 L7 7 M7 1 L1 7" stroke="#2d3748" stroke-width="1.6"/></svg></div><div style="display:inline-flex;align-items:center;height:26px;box-sizing:border-box;padding:1px 8px 0 8px;background:#a9b3c5;border-radius:4px;font-size:14.4px;line-height:25px;color:#2d3748;white-space:nowrap">Must consider long-term impacts<svg width="8" height="8" viewBox="0 0 8 8" style="margin-left:9.5px;flex:none;position:relative;top:-1.5px"><path d="M1 1 L7 7 M7 1 L1 7" stroke="#2d3748" stroke-width="1.6"/></svg></div><div style="display:inline-flex;align-items:center;height:26px;box-sizing:border-box;padding:1px 8px 0 8px;background:#a9b3c5;border-radius:4px;font-size:14.4px;line-height:25px;color:#2d3748;white-space:nowrap">Must align recommendations with business goals<svg width="8" height="8" viewBox="0 0 8 8" style="margin-left:9.5px;flex:none;position:relative;top:-1.5px"><path d="M1 1 L7 7 M7 1 L1 7" stroke="#2d3748" stroke-width="1.6"/></svg></div><div style="margin-left:3.4000000000000004px;font-size:16px;line-height:26px;color:#6b6f76;height:26px">Add</div></div>
<div class="r" style="left:51px;top:983px;width:1869px;height:9px;background:#fff;border-radius:0px;"></div>
<div class="r" style="left:1571px;top:122px;width:1px;height:861px;background:#a7b1c4;border-radius:0px;"></div>
<div class="r" style="left:1896px;top:122px;width:8px;height:861.5px;background:#f4f4f4;border-radius:4px;"></div>
<div class="r" style="left:1896px;top:122px;width:8px;height:851px;background:#a9b3c6;border-radius:4px;"></div>
<div class="t" style="left:1588.8px;top:139.00px;font-size:16px;color:#2d3748;font-weight:bold;">Author</div>
<div class="r" style="left:1588px;top:164px;width:292px;height:44px;background:#f4f4f4;border:1px solid #a7b1c4;box-sizing:border-box;border-radius:4px;"></div>
<div class="t" style="left:1601px;top:178.00px;font-size:16px;color:#555a61;">Wouter Beneke</div>
<div class="t" style="left:1588.8px;top:237.00px;font-size:16px;color:#2d3748;font-weight:bold;">Category</div>
<div class="r" style="left:1588px;top:262px;width:292px;height:44px;background:#fff;border:1px solid #a7b1c4;box-sizing:border-box;border-radius:4px;"></div>
<div class="t" style="left:1588.8px;top:335.00px;font-size:16px;color:#2d3748;font-weight:bold;">Tags</div>
<div class="r" style="left:1588px;top:361px;width:292px;height:51px;background:#fff;border:1px solid #a7b1c4;box-sizing:border-box;border-radius:4px;"></div>
<div class="t" style="left:1605px;top:378.00px;font-size:16px;color:#6b6f76;">Add</div>
<div class="r" style="left:1588px;top:444px;width:292px;height:1px;background:#ececec;border-radius:0px;"></div>
<div class="t" style="left:1588.8px;top:466.00px;font-size:16px;color:#2d3748;font-weight:bold;">Model Provider</div>
<div class="r" style="left:1588px;top:492px;width:292px;height:44px;background:#fff;border:1px solid #a7b1c4;box-sizing:border-box;border-radius:4px;"></div>
<svg class="r" style="left:1864px;top:509px;" width="10" height="8" viewBox="0 0 10 8"><path d="M1.2 1.5 L5 5.5 L8.8 1.5" fill="none" stroke="#111" stroke-width="1.8"/></svg>
<div class="t" style="left:1588.8px;top:566.00px;font-size:16px;color:#2d3748;font-weight:bold;">Model Name</div>
<div class="r" style="left:1588px;top:590px;width:292px;height:44px;background:#fff;border:1px solid #a7b1c4;box-sizing:border-box;border-radius:4px;"></div>
<div class="t" style="left:1601px;top:604.00px;font-size:16px;color:#111;">llama3</div>
<div class="t" style="left:1588.8px;top:663.00px;font-size:16px;color:#2d3748;font-weight:bold;">Max Tokens</div>
<div class="r" style="left:1588px;top:688px;width:292px;height:44px;background:#fff;border:1px solid #a7b1c4;box-sizing:border-box;border-radius:4px;"></div>
<div class="t" style="left:1601px;top:702.00px;font-size:16px;color:#111;">4000</div>
<div class="r" style="left:1588px;top:764px;width:292px;height:1px;background:#ececec;border-radius:0px;"></div>
<div class="t" style="left:1588.8px;top:784.00px;font-size:16px;color:#2d3748;font-weight:bold;">Created</div>
<div class="r" style="left:1588px;top:811px;width:292px;height:43px;background:#f4f4f4;border:1px solid #a7b1c4;box-sizing:border-box;border-radius:4px;"></div>
<div class="t" style="left:1588.8px;top:882.00px;font-size:16px;color:#2d3748;font-weight:bold;">Last Modified</div>
<div class="r" style="left:1588px;top:908px;width:292px;height:43px;background:#f4f4f4;border:1px solid #a7b1c4;box-sizing:border-box;border-radius:4px;"></div>
</body></html>
